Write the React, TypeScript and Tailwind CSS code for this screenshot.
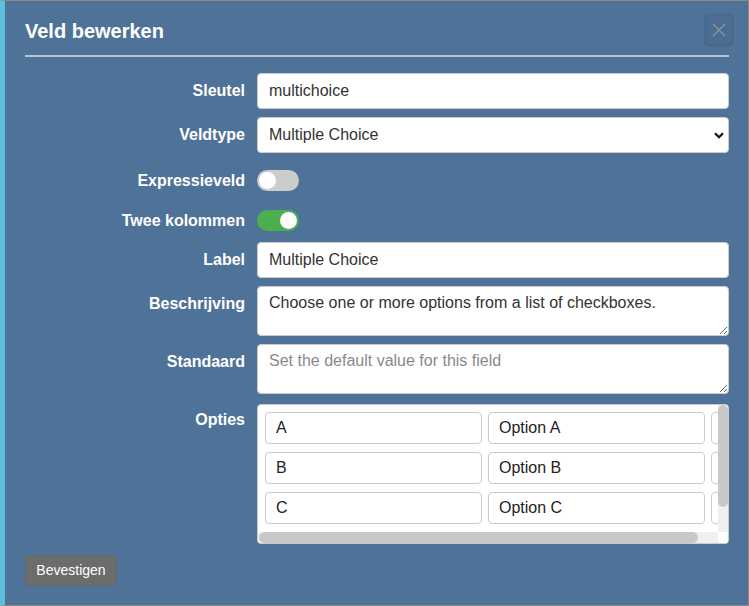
import { useState } from "react";

const inputCls =
  "h-[36px] w-full rounded-[4px] border border-[#cccccc] bg-white px-[11px] text-[16px] text-[#333] outline-none";

const options = [
  { key: "A", label: "Option A" },
  { key: "B", label: "Option B" },
  { key: "C", label: "Option C" },
];

function Row({
  label,
  children,
  className = "",
  labelPad = "pt-[8px]",
}: {
  label: string;
  children: React.ReactNode;
  className?: string;
  labelPad?: string;
}) {
  return (
    <div className={"flex " + className}>
      <label className={"w-[232px] shrink-0 pr-[12px] text-right text-[16px] font-bold leading-[20px] text-white " + labelPad}>
        {label}
      </label>
      <div className="min-w-0 flex-1">{children}</div>
    </div>
  );
}

function Toggle({ on, onClick }: { on: boolean; onClick: () => void }) {
  return (
    <button
      onClick={onClick}
      className={
        "relative h-[21px] w-[42px] rounded-full " + (on ? "bg-[#4cae4c]" : "bg-[#cccccc]")
      }
    >
      <span
        className={
          "absolute top-[2px] h-[17px] w-[17px] rounded-full bg-white " + (on ? "left-[23px]" : "left-[2px]")
        }
      />
    </button>
  );
}

export default function App() {
  const [expr, setExpr] = useState(false);
  const [twoCols, setTwoCols] = useState(true);

  return (
    <div className="relative h-[606px] w-[749px] border-b border-l-[5px] border-r border-t border-b-[#8a8a8a] border-l-[#5bc0de] border-r-[#8a8a8a] border-t-[#8a8a8a] bg-[#4f7299] pl-[20px] pr-[19px] pt-[19px] font-['Liberation_Sans',Arial,sans-serif]">
      {/* header */}
      <div className="border-b-2 border-[#b8c5d6] pb-[13px]">
        <h3 className="text-[20px] font-bold leading-[22px] text-white">Veld bewerken</h3>
      </div>
      <button className="absolute right-[15px] top-[13px] flex h-[31px] w-[28px] items-center justify-center rounded-[4px] border border-[#46678c] bg-[#4b6d94] shadow-[0_1px_2px_rgba(0,0,0,0.15)]">
        <svg width="14" height="14" viewBox="0 0 14 14" fill="none" stroke="#8d939c" strokeWidth="1.4">
          <path d="M1 1l12 12M13 1L1 13" />
        </svg>
      </button>

      <Row label="Sleutel" className="mt-[16px]">
        <input className={inputCls} defaultValue="multichoice" />
      </Row>

      <Row label="Veldtype" className="mt-[8px]">
        <div className="relative">
          <select className={inputCls + " appearance-none"} defaultValue="mc">
            <option value="mc">Multiple Choice</option>
          </select>
          <svg
            className="pointer-events-none absolute right-[5px] top-[15px]"
            width="10"
            height="7"
            viewBox="0 0 10 7"
            fill="none"
            stroke="#111"
            strokeWidth="2.2"
          >
            <path d="M1 1.2l4 4 4-4" />
          </svg>
        </div>
      </Row>

      <div className="mt-[17px] flex h-[21px] items-center">
        <span className="w-[232px] shrink-0 pr-[12px] text-right text-[16px] font-bold text-white">Expressieveld</span>
        <Toggle on={expr} onClick={() => setExpr(!expr)} />
      </div>

      <div className="mt-[19px] flex h-[21px] items-center">
        <span className="w-[232px] shrink-0 pr-[12px] text-right text-[16px] font-bold text-white">Twee kolommen</span>
        <Toggle on={twoCols} onClick={() => setTwoCols(!twoCols)} />
      </div>

      <Row label="Label" className="mt-[11px]">
        <input className={inputCls} defaultValue="Multiple Choice" />
      </Row>

      <Row label="Beschrijving" className="mt-[8px]">
        <textarea
          className="block h-[50px] w-full rounded-[4px] border border-[#cccccc] bg-white px-[11px] py-[6px] text-[16px] leading-[20px] text-[#333] outline-none"
          defaultValue="Choose one or more options from a list of checkboxes."
        />
      </Row>

      <Row label="Standaard" className="mt-[8px]">
        <textarea
          className="block h-[50px] w-full rounded-[4px] border border-[#cccccc] bg-white px-[11px] py-[6px] text-[16px] leading-[20px] text-[#333] outline-none placeholder:text-[#8a8a8a]"
          placeholder="Set the default value for this field"
        />
      </Row>

      <Row label="Opties" className="mt-[10px]" labelPad="pt-[6px]">
        <div className="relative h-[140px] overflow-hidden rounded-[4px] border border-[#cccccc] bg-white">
          <div className="flex flex-col gap-[8px] pl-[7px] pt-[7px]">
            {options.map((o) => (
              <div key={o.key} className="flex gap-[6px]">
                <input
                  className="h-[32px] w-[217px] shrink-0 rounded-[4px] border border-[#cccccc] px-[10px] text-[16px] text-[#222] outline-none"
                  defaultValue={o.key}
                />
                <input
                  className="h-[32px] w-[217px] shrink-0 rounded-[4px] border border-[#cccccc] px-[10px] text-[16px] text-[#222] outline-none"
                  defaultValue={o.label}
                />
                <div className="h-[32px] w-[217px] shrink-0 rounded-[4px] border border-[#cccccc]" />
              </div>
            ))}
            <div className="h-[30px] w-[30px] rounded-[4px] border border-[#cccccc]" />
          </div>
          {/* scrollbars */}
          <div className="absolute bottom-[10px] right-0 top-0 w-[10px] bg-[#f0f0f0]">
            <div className="h-[102px] w-[10px] rounded-full bg-[#c8c8c8]" />
          </div>
          <div className="absolute bottom-0 left-0 right-[10px] h-[11px] bg-[#f0f0f0]">
            <div className="ml-[1px] h-[11px] w-[439px] rounded-full bg-[#c8c8c8]" />
          </div>
          <div className="absolute bottom-0 right-0 h-[11px] w-[10px] bg-white" />
        </div>
      </Row>

      <button className="mt-[11px] h-[31px] w-[92px] rounded-[3px] border border-[#666] bg-[#6c6c6c] text-[14px] text-white">
        Bevestigen
      </button>
    </div>
  );
}
